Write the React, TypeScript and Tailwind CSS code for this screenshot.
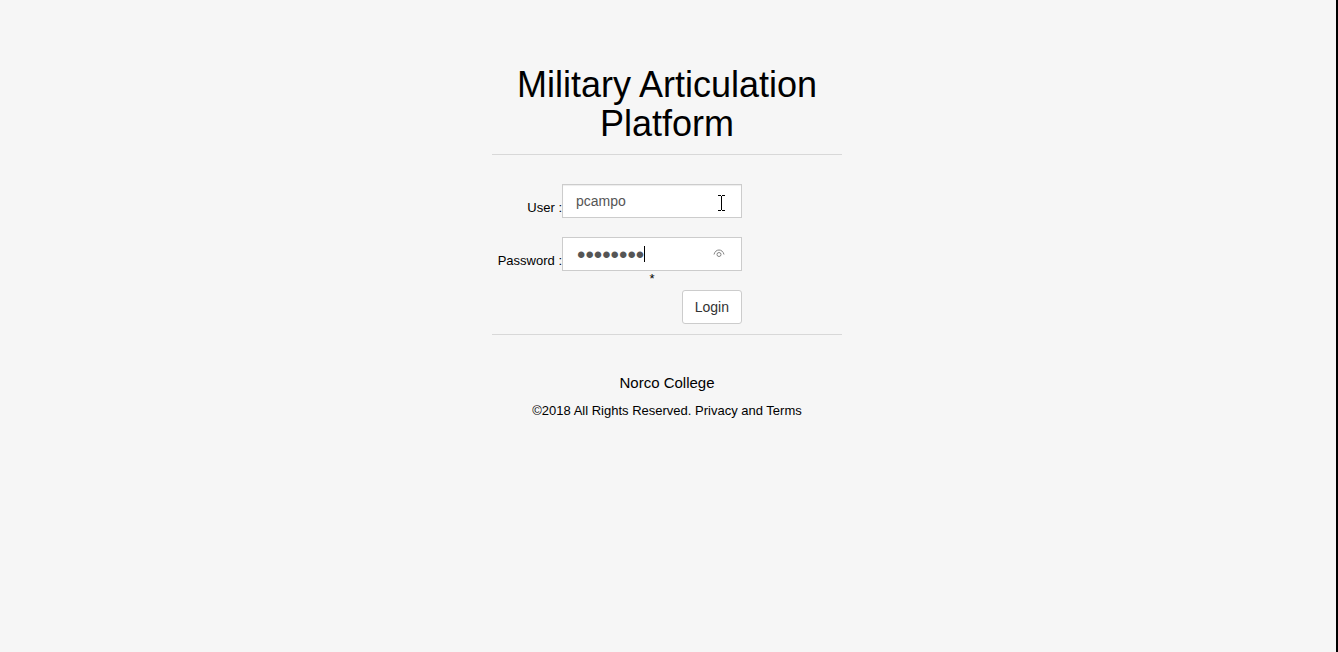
import React, { useState } from "react";

function TextCursor() {
  return (
    <svg
      className="pointer-events-none absolute top-[11px] right-4 h-4 w-[9px]"
      viewBox="0 0 9 16"
      fill="none"
      stroke="#000"
      shapeRendering="crispEdges"
      aria-hidden="true"
    >
      <path d="M1 0.5h3M5 0.5h3M4.5 1v14M1 15.5h3M5 15.5h3" />
    </svg>
  );
}

function RevealIcon() {
  return (
    <svg className="h-3 w-3" viewBox="0 0 12 12" fill="none" stroke="#858585" aria-hidden="true">
      <path d="M1 6.5C1.8 3.4 3.8 2 6 2s4.2 1.4 5 4.5" />
      <circle cx="6" cy="6.5" r="2" />
    </svg>
  );
}

export default function App() {
  const [user, setUser] = useState("pcampo");
  const [password, setPassword] = useState("password");
  const [revealed, setRevealed] = useState(false);

  return (
    <div className="min-h-screen border-r-2 border-black bg-[#f6f6f6] pr-0.5 font-['Liberation_Sans',Arial,sans-serif] text-[13px] leading-5 text-black">
      <main className="mx-auto w-full max-w-[350px] pt-[65px]">
        <h1 className="border-b border-[#d8d8d8] pb-[11px] text-center text-[36px] leading-[39px]">
          Military Articulation Platform
        </h1>

        <form className="border-b border-[#d8d8d8] pt-[29px] pb-[10px]" onSubmit={(e) => e.preventDefault()}>
          <div className="grid grid-cols-[70px_180px] items-end">
            <label htmlFor="user" className="text-right">
              User :
            </label>
            <div className="relative">
              <input
                id="user"
                type="text"
                value={user}
                onChange={(e) => setUser(e.target.value)}
                className="block h-[34px] w-full border border-[#ccc] bg-white px-[13px] text-sm text-[#555] shadow-[inset_0_1px_1px_rgba(0,0,0,0.075)] outline-none"
              />
              <TextCursor />
            </div>
          </div>

          <div className="mt-[19px] grid grid-cols-[70px_180px] items-end">
            <label htmlFor="password" className="text-right">
              Password :
            </label>
            <div className="relative">
              <input
                id="password"
                type={revealed ? "text" : "password"}
                value={password}
                onChange={(e) => setPassword(e.target.value)}
                className="block h-[34px] w-full border border-[#ccc] bg-white pt-0.5 pr-8 pl-[14px] text-2xl text-[#555] outline-none"
              />
              <span className="pointer-events-none absolute top-[9px] left-[82px] h-4 w-px bg-black" />
              <button
                type="button"
                aria-label="Show password"
                onClick={() => setRevealed(!revealed)}
                className="absolute top-[11px] right-[17px]"
              >
                <RevealIcon />
              </button>
            </div>
          </div>

          <div className="ml-[70px] w-[180px] pb-[3px] text-center leading-4">*</div>

          <div className="flex w-[250px] justify-end">
            <button
              type="submit"
              className="h-[34px] rounded-[3px] border border-[#ccc] bg-white px-3 text-sm text-[#333]"
            >
              Login
            </button>
          </div>
        </form>

        <footer className="pt-[38px] text-center">
          <p className="text-[15px]">Norco College</p>
          <p className="mt-2">©2018 All Rights Reserved. Privacy and Terms</p>
        </footer>
      </main>
    </div>
  );
}
